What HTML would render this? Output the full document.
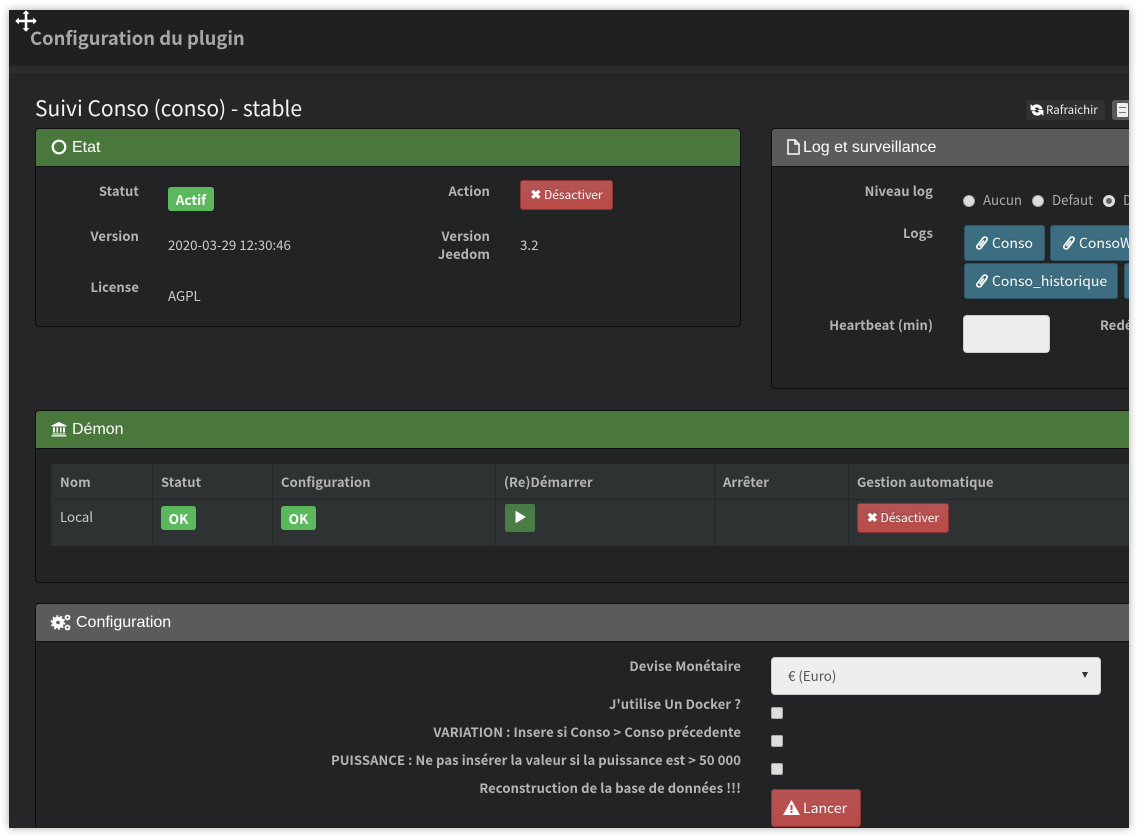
<!DOCTYPE html>
<html lang="fr"><head><meta charset="utf-8"><title>Configuration du plugin</title>
<style>
html,body{margin:0;padding:0;background:#fff;width:1137px;height:836px;overflow:hidden}
#win{position:absolute;left:9px;top:10px;width:1120px;height:818px;background:#262628;overflow:hidden;box-shadow:0 0 8px rgba(0,0,0,.35)}
#root{position:absolute;left:-9px;top:-10px;width:1137px;height:836px;overflow:hidden;font-family:"Noto Sans CJK JP","Liberation Sans",sans-serif;color:#ccc}
.t{position:absolute;white-space:nowrap;line-height:18px;font-size:13.3px}
.l{font-weight:700;color:#b5b5b5;text-align:right;font-size:13px;letter-spacing:.1px}
.r{position:absolute;box-sizing:border-box}
.p{position:absolute;box-sizing:border-box;background:#222325;border:1px solid #0f0f0f;border-radius:4px;overflow:hidden}
.h{position:absolute;left:0;top:0;right:0;height:37px;border-bottom:1px solid #0f0f0f;box-sizing:content-box}
.ht{position:absolute;white-space:nowrap;font:16px/20px "Liberation Sans",sans-serif;color:#fff;letter-spacing:0}
.btn{position:absolute;box-sizing:border-box;border-radius:3px;color:#fff;white-space:nowrap;text-shadow:0 -1px 0 rgba(0,0,0,.25)}
.red{background:linear-gradient(#b55555,#b94a48);border:1px solid #8e3331;font-size:12px;text-align:center}
.blue{background:#3d6d80;border:1px solid #2f5666;font-size:14px;line-height:34px}
.g{position:absolute;box-sizing:border-box;background:#5cb85c;border-radius:3px;color:#fff;font-weight:700;font-size:13.5px;text-align:center;line-height:24px}
.cb{position:absolute;width:12px;height:12px;box-sizing:border-box;background:#ddd;border:1px solid #aaa;border-radius:2px}
.rd{position:absolute;width:12px;height:12px;border-radius:50%;background:#ddd;box-sizing:border-box;border:1px solid #aaa}
svg{position:absolute;overflow:visible}
</style></head><body>
<div id="win"><div id="root">
  <div class="r" style="left:9px;top:10px;width:1120px;height:56px;background:#202020"></div>
  <div class="r" style="left:9px;top:66px;width:1120px;height:7px;background:#2c2c2e"></div>
  <div class="t" style="left:30px;top:28px;font-size:18.4px;line-height:20px;font-weight:700;color:#a8a8a8">Configuration du plugin</div>
  <div class="t" style="left:35px;top:95px;font-size:21px;line-height:26px;color:#f2f2f2">Suivi Conso (conso) - stable</div>

  <div class="r" style="left:1026px;top:100px;width:79px;height:20px;background:#303133;border-radius:3px"></div>
  <svg style="left:1030px;top:102.500px" width="14" height="14" viewBox="0 0 13 13"><path d="M11 5A5 5 0 0 0 2.500 3.500L1 2V6.200H5.200L3.800 4.800A3.200 3.200 0 0 1 9.200 5.600ZM2 8A5 5 0 0 0 10.500 9.500L12 11V6.800H7.800L9.200 8.200A3.200 3.200 0 0 1 3.800 7.400Z" fill="#fff" stroke="#fff" stroke-width=".9"/></svg>
  <div class="t" style="left:1046px;top:101px;font-size:11.500px;color:#eee">Rafraichir</div>
  <div class="r" style="left:1112px;top:100px;width:20px;height:20px;background:#58595b;border-radius:3px"></div>
  <div class="r" style="left:1117px;top:103px;width:11px;height:14px;background:#eee;border-radius:1px"></div>
  <div class="r" style="left:1119px;top:107px;width:7px;height:1px;background:#777"></div>
  <div class="r" style="left:1119px;top:112px;width:7px;height:1px;background:#777"></div>

  <!-- Etat -->
  <div class="p" style="left:35px;top:128px;width:706px;height:199px"><div class="h" style="background:#4a773c"></div></div>
  <svg style="left:51px;top:139px" width="16" height="16" viewBox="0 0 16 16"><circle cx="8" cy="8" r="6.300" fill="none" stroke="#fff" stroke-width="2.200"/></svg>
  <div class="ht" style="left:72px;top:138px">Etat</div>
  <div class="t l" style="right:998px;top:182px">Statut</div>
  <div class="g" style="left:168px;top:187px;width:46px;height:24px">Actif</div>
  <div class="t l" style="right:998px;top:227px">Version</div>
  <div class="t" style="left:168px;top:236px">2020-03-29 12:30:46</div>
  <div class="t l" style="right:998px;top:278px">License</div>
  <div class="t" style="left:168px;top:287px">AGPL</div>
  <div class="t l" style="right:647px;top:182px">Action</div>
  <div class="btn red" style="left:520px;top:180px;width:93px;height:30px;line-height:26px"><b style="font-size:13px">✖</b> Désactiver</div>
  <div class="t l" style="right:647px;top:227px">Version</div>
  <div class="t l" style="right:647px;top:245px">Jeedom</div>
  <div class="t" style="left:520px;top:236px">3.2</div>

  <!-- Log -->
  <div class="p" style="left:771px;top:128px;width:366px;height:261px"><div class="h" style="background:#5a5b5d"></div></div>
  <svg style="left:787px;top:139px" width="13" height="16" viewBox="0 0 13 16"><path d="M1 1H8L12 5V15H1Z M8 1V5H12" fill="none" stroke="#fff" stroke-width="1.500"/></svg>
  <div class="ht" style="left:803px;top:138px">Log et surveillance</div>
  <div class="t l" style="right:204px;top:182px">Niveau log</div>
  <div class="rd" style="left:963px;top:195px"></div>
  <div class="t" style="left:983px;top:191px;color:#aaa">Aucun</div>
  <div class="rd" style="left:1032px;top:195px"></div>
  <div class="t" style="left:1052px;top:191px;color:#aaa">Defaut</div>
  <div class="rd" style="left:1103px;top:195px;border:3px solid #ddd;background:#666"></div>
  <div class="t" style="left:1123px;top:191px;color:#aaa">D</div>
  <div class="t l" style="right:204px;top:224px">Logs</div>
  <div class="btn blue" style="left:964px;top:225px;width:81px;height:36px;padding-left:27px">Conso</div>
  <div class="btn blue" style="left:1050px;top:225px;width:87px;height:36px;padding-left:28px;overflow:hidden">ConsoW</div>
  <div class="btn blue" style="left:964px;top:263px;width:154px;height:36px;padding-left:27px">Conso_historique</div>
  <div class="btn blue" style="left:1124px;top:263px;width:13px;height:36px"></div>
  <svg style="left:975px;top:235px" width="14" height="16" viewBox="0 0 14 16"><path d="M11.500 6L6 13C4.300 15 1.500 13.500 1.800 11.200L8 3C9.800 1 12.800 2.500 12 5L6 12.300M8.800 5.500L4.500 11" fill="none" stroke="#fff" stroke-width="1.600"/></svg>
  <svg style="left:1062px;top:235px" width="14" height="16" viewBox="0 0 14 16"><path d="M11.500 6L6 13C4.300 15 1.500 13.500 1.800 11.200L8 3C9.800 1 12.800 2.500 12 5L6 12.300M8.800 5.500L4.500 11" fill="none" stroke="#fff" stroke-width="1.600"/></svg>
  <svg style="left:975px;top:273px" width="14" height="16" viewBox="0 0 14 16"><path d="M11.500 6L6 13C4.300 15 1.500 13.500 1.800 11.200L8 3C9.800 1 12.800 2.500 12 5L6 12.300M8.800 5.500L4.500 11" fill="none" stroke="#fff" stroke-width="1.600"/></svg>
  <div class="t l" style="right:204px;top:316px">Heartbeat (min)</div>
  <div class="r" style="left:963px;top:315px;width:87px;height:38px;background:#eee;border:1px solid #ccc;border-radius:4px"></div>
  <div class="t l" style="left:1100px;top:316px;text-align:left">Redé</div>

  <!-- Démon -->
  <div class="p" style="left:35px;top:410px;width:1102px;height:173px"><div class="h" style="background:#4a773c"></div></div>
  <svg style="left:51px;top:421px" width="16" height="16" viewBox="0 0 16 16"><path d="M8 1L15.500 4.500V5.500H.5V4.500ZM2 6.500H4V11.500H2ZM5.500 6.500H7V11.500H5.500ZM9 6.500H10.500V11.500H9ZM12 6.500H14V11.500H12ZM1.500 12.500H14.500V13.500H1.500ZM.5 14.200H15.500V15.500H.5Z" fill="#fff"/></svg>
  <div class="ht" style="left:72px;top:420px">Démon</div>
  <div class="r" style="left:51px;top:464px;width:1086px;height:82px;background:#2e3233"></div>
  <div class="r" style="left:51px;top:499px;width:1086px;height:1px;background:#25282a"></div>
  <div class="r" style="left:152px;top:464px;width:1px;height:82px;background:#25282a"></div>
  <div class="r" style="left:272px;top:464px;width:1px;height:82px;background:#25282a"></div>
  <div class="r" style="left:495px;top:464px;width:1px;height:82px;background:#25282a"></div>
  <div class="r" style="left:714px;top:464px;width:1px;height:82px;background:#25282a"></div>
  <div class="r" style="left:848px;top:464px;width:1px;height:82px;background:#25282a"></div>
  <div class="t l" style="left:60px;top:473px;text-align:left">Nom</div>
  <div class="t l" style="left:161px;top:473px;text-align:left">Statut</div>
  <div class="t l" style="left:281px;top:473px;text-align:left">Configuration</div>
  <div class="t l" style="left:504px;top:473px;text-align:left">(Re)Démarrer</div>
  <div class="t l" style="left:723px;top:473px;text-align:left">Arrêter</div>
  <div class="t l" style="left:857px;top:473px;text-align:left">Gestion automatique</div>
  <div class="t" style="left:60px;top:508px">Local</div>
  <div class="g" style="left:161px;top:506px;width:35px;height:24px">OK</div>
  <div class="g" style="left:281px;top:506px;width:35px;height:24px">OK</div>
  <div class="r" style="left:505px;top:504px;width:30px;height:28px;background:#4a7c45;border-radius:2px"></div>
  <svg style="left:515px;top:510px" width="12" height="14" viewBox="0 0 12 14"><path d="M1 1.500L10 7L1 12.500Z" fill="#fff" stroke="#fff" stroke-linejoin="round"/></svg>
  <div class="btn red" style="left:857px;top:503px;width:92px;height:30px;line-height:26px"><b style="font-size:13px">✖</b> Désactiver</div>

  <!-- Configuration -->
  <div class="p" style="left:35px;top:603px;width:1102px;height:233px"><div class="h" style="background:#5a5b5d"></div></div>
  <svg style="left:51px;top:614px" width="20" height="17" viewBox="0 0 20 17"><circle cx="7" cy="8.500" r="3.800" fill="none" stroke="#fff" stroke-width="4"/><circle cx="7" cy="8.500" r="6.500" fill="none" stroke="#fff" stroke-width="1.600" stroke-dasharray="2 2.100"/><circle cx="16.500" cy="3.500" r="2" fill="none" stroke="#fff" stroke-width="1.800"/><circle cx="16.500" cy="13.500" r="2" fill="none" stroke="#fff" stroke-width="1.800"/></svg>
  <div class="ht" style="left:76px;top:613px">Configuration</div>
  <div class="t l" style="right:396px;top:657px">Devise Monétaire</div>
  <div class="t l" style="right:396px;top:695px">J'utilise Un Docker ?</div>
  <div class="t l" style="right:396px;top:723px">VARIATION : Insere si Conso &gt; Conso précedente</div>
  <div class="t l" style="right:396px;top:751px">PUISSANCE : Ne pas insérer la valeur si la puissance est &gt; 50 000</div>
  <div class="t l" style="right:396px;top:779px">Reconstruction de la base de données !!!</div>
  <div class="r" style="left:771px;top:657px;width:330px;height:38px;background:#eee;border:1px solid #ccc;border-radius:4px"></div>
  <div class="t" style="left:788px;top:667px;color:#555">€ (Euro)</div>
  <svg style="left:1082px;top:672px" width="6" height="7" viewBox="0 0 6 7"><path d="M0 0H6L3 6Z" fill="#333"/></svg>
  <div class="cb" style="left:771px;top:707px"></div>
  <div class="cb" style="left:771px;top:735px"></div>
  <div class="cb" style="left:771px;top:763px"></div>
  <div class="btn red" style="left:771px;top:789px;width:90px;height:38px;font-size:14px;line-height:36px;text-align:left;padding-left:31px">Lancer</div>
  <svg style="left:783px;top:800px" width="17" height="15" viewBox="0 0 17 15"><path fill-rule="evenodd" d="M8.500 0L17 15H0ZM7.500 5V10H9.500V5ZM7.500 11V13H9.500V11Z" fill="#fff"/></svg>
</div></div>
<svg style="left:15px;top:10px" width="22" height="22" viewBox="0 0 22 22"><path d="M11 0L15 4H12.500V9.500H18V7L22 11L18 15V12.500H12.500V18H15L11 22L7 18H9.500V12.500H4V15L0 11L4 7V9.500H9.500V4H7Z" fill="#fff" stroke="#222" stroke-width=".5"/></svg>
</body></html>
